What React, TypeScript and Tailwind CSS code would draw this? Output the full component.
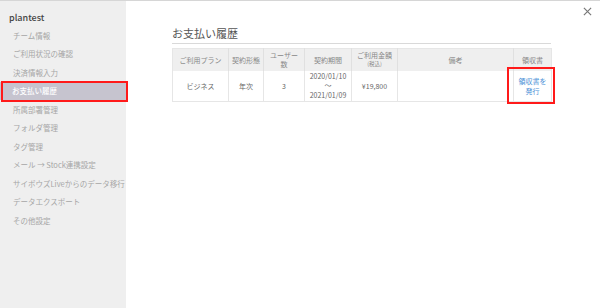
import React from "react";

const items = [
  "チーム情報",
  "ご利用状況の確認",
  "決済情報入力",
  "お支払い履歴",
  "所属部署管理",
  "フォルダ管理",
  "タグ管理",
  "メール → Stock連携設定",
  "サイボウズLiveからのデータ移行",
  "データエクスポート",
  "その他設定",
];

const font = { fontFamily: '"Noto Sans CJK JP", "Noto Sans", sans-serif' };

export default function App() {
  return (
    <div className="flex h-[308px] w-[600px] border-t border-[#d6d6d6] bg-white overflow-hidden" style={font}>
      <aside className="w-[126px] shrink-0 bg-[#efefef] pt-[10px]">
        <div className="pl-[9px] text-[9px] leading-[14px] text-[#444] font-medium">plantest</div>
        <ul className="mt-[1px]">
          {items.map((t) => {
            const active = t === "お支払い履歴";
            return (
              <li
                key={t}
                className={
                  active
                    ? "relative h-[18.5px] flex items-center pl-[12px] text-[7.5px] text-white bg-[#c6c4cf] font-medium"
                    : "h-[18.5px] flex items-center pl-[13px] text-[7.5px] text-[#a6a6a6]"
                }
              >
                {t}
                {active && (
                  <span className="absolute left-[1px] top-[-1px] w-[127px] h-[21px] border-2 border-[#ff1a1a]" />
                )}
              </li>
            );
          })}
        </ul>
      </aside>
      <main className="relative flex-1 pl-[46px] pt-[25px]">
        <button className="absolute right-[8px] top-[6px] text-[#777]">
          <svg width="9" height="9" viewBox="0 0 10 10" stroke="currentColor" strokeWidth="1.3">
            <path d="M1 1L9 9M9 1L1 9" />
          </svg>
        </button>
        <h1 className="text-[11px] leading-[14px] text-[#555] pb-[3px] border-b border-[#d9d9d9] w-[379px]">
          お支払い履歴
        </h1>
        <div className="mt-[4px] w-[379px]">
          <div className="relative">
            <table className="w-[379px] table-fixed border-collapse border border-[#e6e6e6] text-[7px] text-[#777]">
              <colgroup>
                <col className="w-[56px]" />
                <col className="w-[35px]" />
                <col className="w-[41px]" />
                <col className="w-[47px]" />
                <col className="w-[46px]" />
                <col className="w-[116px]" />
                <col className="w-[38px]" />
              </colgroup>
              <thead>
                <tr className="h-[22px] bg-[#efefef] text-[#888]">
                  <th className="font-normal border-r border-[#e0e0e0]">ご利用プラン</th>
                  <th className="font-normal border-r border-[#e0e0e0]">契約形態</th>
                  <th className="font-normal border-r border-[#e0e0e0] leading-[9px]">ユーザー<br />数</th>
                  <th className="font-normal border-r border-[#e0e0e0]">契約期間</th>
                  <th className="font-normal border-r border-[#e0e0e0] leading-[8.5px]">ご利用金額<br /><span className="text-[5.5px]">(税込)</span></th>
                  <th className="font-normal border-r border-[#e0e0e0]">備考</th>
                  <th className="font-normal">領収書</th>
                </tr>
              </thead>
              <tbody>
                <tr className="h-[31px] text-center text-[#666]">
                  <td className="border-r border-[#e6e6e6]">ビジネス</td>
                  <td className="border-r border-[#e6e6e6]">年次</td>
                  <td className="border-r border-[#e6e6e6]">3</td>
                  <td className="border-r border-[#e6e6e6] leading-[9.5px]">2020/01/10<br />〜<br />2021/01/09</td>
                  <td className="border-r border-[#e6e6e6]">¥19,800</td>
                  <td className="border-r border-[#e6e6e6]"></td>
                  <td className="text-[#4a8fd6] leading-[10px]">領収書を<br />発行</td>
                </tr>
              </tbody>
            </table>
            <span className="absolute left-[335px] top-[19px] w-[48px] h-[37px] border-2 border-[#ff1a1a]" />
          </div>
        </div>
      </main>
    </div>
  );
}
